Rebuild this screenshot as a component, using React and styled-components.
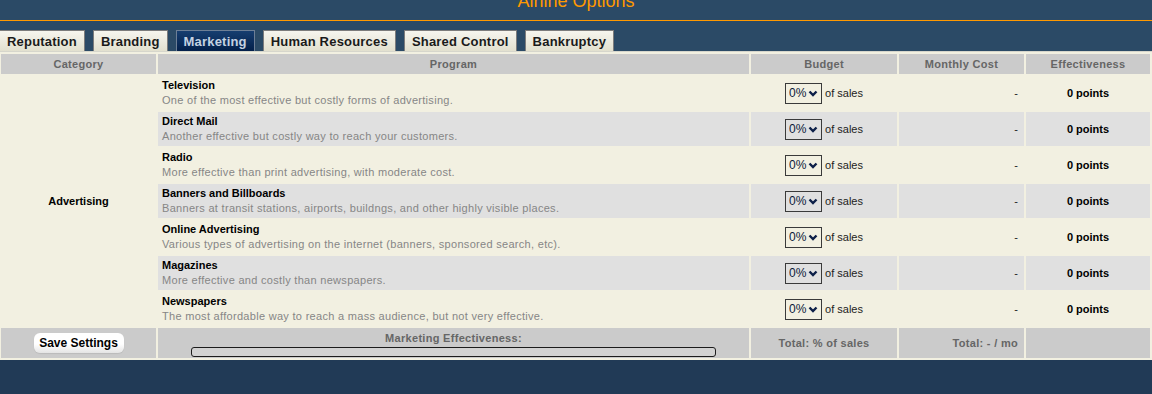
import React from 'react';
import styled, { createGlobalStyle } from 'styled-components';

const GlobalStyle = createGlobalStyle`
    html, body {
        margin: 0;
        padding: 0;
        background-color: #213a56;
        font-family: "Liberation Sans", Arial, sans-serif;
    }
`;

const Top = styled.div`
    background-color: #2b4a66;
`;

const Header = styled.div`
    height: 20px;
    border-bottom: 1px solid #ff9900;
    overflow: hidden;
`;

const Title = styled.h1`
    margin: -9px 0 0 0;
    font-size: 18px;
    line-height: 20px;
    font-weight: normal;
    color: #ff9900;
    text-align: center;
`;

const Tabs = styled.div`
    display: flex;
    gap: 8px;
    padding-top: 9px;
    margin-left: -1px;
`;

const Tab = styled.div`
    height: 20px;
    padding: 0 7px;
    display: flex;
    align-items: center;
    font-size: 13px;
    font-weight: bold;
    letter-spacing: 0.2px;
    border: 1px solid ${p => (p.$active ? '#6d7f96' : '#7c7c7c')};
    border-bottom: none;
    color: ${p => (p.$active ? '#c4d2e2' : '#1a1a1a')};
    background: ${p => (p.$active
        ? 'linear-gradient(#163e70, #03204a)'
        : 'linear-gradient(#f6f5ee, #e2e0cf)')};
    cursor: pointer;
`;

const Grid = styled.div`
    display: grid;
    grid-template-columns: 155px 591px 146px 125px 1fr;
    gap: 2px;
    padding: 2px 2px 2px 1px;
    border-top: 1px solid #d6d6cc;
    background-color: #f2f0e1;
    font-size: 11px;
`;

const Head = styled.div`
    height: 20px;
    display: flex;
    align-items: center;
    justify-content: center;
    background-color: #cbcbcb;
    color: #666;
    font-weight: bold;
    letter-spacing: 0.3px;
`;

const Category = styled.div`
    grid-row: span 7;
    display: flex;
    align-items: center;
    justify-content: center;
    font-weight: bold;
    color: #000;
`;

const Cell = styled.div`
    height: 34px;
    display: flex;
    align-items: center;
    justify-content: ${p => p.$align || 'center'};
    padding: ${p => (p.$align === 'flex-end' ? '0 6px 0 0' : '0')};
    background-color: ${p => (p.$odd ? '#e0e0e0' : 'transparent')};
`;

const Program = styled.div`
    height: 34px;
    display: flex;
    flex-direction: column;
    justify-content: center;
    padding-left: 4px;
    line-height: 15px;
    background-color: ${p => (p.$odd ? '#e0e0e0' : 'transparent')};
`;

const ProgName = styled.div`
    font-weight: bold;
    color: #000;
`;

const ProgDesc = styled.div`
    color: #868686;
    letter-spacing: 0.3px;
`;

const SelectWrap = styled.span`
    position: relative;
    display: inline-flex;
    margin-right: 3px;
`;

const Select = styled.select`
    appearance: none;
    -webkit-appearance: none;
    width: 37px;
    height: 21px;
    margin: 0;
    padding: 0 0 0 3px;
    border: 1px solid #3a3a3a;
    border-radius: 0;
    background: transparent;
    font-family: "Liberation Sans", Arial, sans-serif;
    font-size: 12px;
    color: #0c1a3a;
`;

const Chevron = styled.svg`
    position: absolute;
    right: 4px;
    top: 7px;
    pointer-events: none;
`;

const OfSales = styled.span`
    color: #222;
`;

const Points = styled.span`
    font-weight: bold;
    color: #000;
`;

const Dash = styled.span`
    color: #222;
`;

const Foot = styled.div`
    height: 30px;
    display: flex;
    flex-direction: ${p => (p.$column ? 'column' : 'row')};
    align-items: center;
    justify-content: ${p => p.$align || 'center'};
    padding: ${p => (p.$align === 'flex-end' ? '0 6px 0 0' : '0')};
    background-color: #cbcbcb;
    color: #666;
    font-weight: bold;
    letter-spacing: 0.3px;
`;

const FootLabel = styled.div`
    margin-top: 4px;
    line-height: 13px;
`;

const SaveButton = styled.button`
    width: 90px;
    height: 20px;
    padding: 0;
    border: none;
    border-radius: 6px;
    background: linear-gradient(#ffffff 55%, #e4e4e4);
    box-shadow: 0 1px 1px rgba(0, 0, 0, 0.08);
    font-family: "Liberation Sans", Arial, sans-serif;
    font-size: 12px;
    font-weight: bold;
    color: #000;
    cursor: pointer;
`;

const Bar = styled.div`
    width: 523px;
    height: 8px;
    margin-top: 2px;
    border: 1px solid #1c1c1c;
    border-radius: 3px;
    background-color: #d2d2d2;
`;

const tabs = ['Reputation', 'Branding', 'Marketing', 'Human Resources', 'Shared Control', 'Bankruptcy'];

const programs = [
    { name: 'Television', desc: 'One of the most effective but costly forms of advertising.' },
    { name: 'Direct Mail', desc: 'Another effective but costly way to reach your customers.' },
    { name: 'Radio', desc: 'More effective than print advertising, with moderate cost.' },
    { name: 'Banners and Billboards', desc: 'Banners at transit stations, airports, buildngs, and other highly visible places.' },
    { name: 'Online Advertising', desc: 'Various types of advertising on the internet (banners, sponsored search, etc).' },
    { name: 'Magazines', desc: 'More effective and costly than newspapers.' },
    { name: 'Newspapers', desc: 'The most affordable way to reach a mass audience, but not very effective.' },
];

function BudgetSelect() {
    return (
        <SelectWrap>
            <Select defaultValue="0">
                <option value="0">0%</option>
                <option value="1">1%</option>
                <option value="2">2%</option>
                <option value="5">5%</option>
            </Select>
            <Chevron width="10" height="7" viewBox="0 0 10 7">
                <polyline points="1.5,1.5 5,5 8.5,1.5" fill="none" stroke="#0c1f48" strokeWidth="2.4" />
            </Chevron>
        </SelectWrap>
    );
}

export default function App() {
    return (
        <>
            <GlobalStyle />
            <Top>
                <Header>
                    <Title>Airline Options</Title>
                </Header>
                <Tabs>
                    {tabs.map(t => (
                        <Tab key={t} $active={t === 'Marketing'}>{t}</Tab>
                    ))}
                </Tabs>
            </Top>
            <Grid>
                <Head>Category</Head>
                <Head>Program</Head>
                <Head>Budget</Head>
                <Head>Monthly Cost</Head>
                <Head>Effectiveness</Head>

                {programs.map((p, i) => (
                    <React.Fragment key={p.name}>
                        {i === 0 && <Category>Advertising</Category>}
                        <Program $odd={i % 2 === 1}>
                            <ProgName>{p.name}</ProgName>
                            <ProgDesc>{p.desc}</ProgDesc>
                        </Program>
                        <Cell $odd={i % 2 === 1}>
                            <BudgetSelect />
                            <OfSales>of sales</OfSales>
                        </Cell>
                        <Cell $odd={i % 2 === 1} $align="flex-end"><Dash>-</Dash></Cell>
                        <Cell $odd={i % 2 === 1}><Points>0 points</Points></Cell>
                    </React.Fragment>
                ))}

                <Foot><SaveButton>Save Settings</SaveButton></Foot>
                <Foot $column $align="flex-start">
                    <FootLabel>Marketing Effectiveness:</FootLabel>
                    <Bar />
                </Foot>
                <Foot>Total: % of sales</Foot>
                <Foot $align="flex-end">Total: - / mo</Foot>
                <Foot />
            </Grid>
        </>
    );
}
